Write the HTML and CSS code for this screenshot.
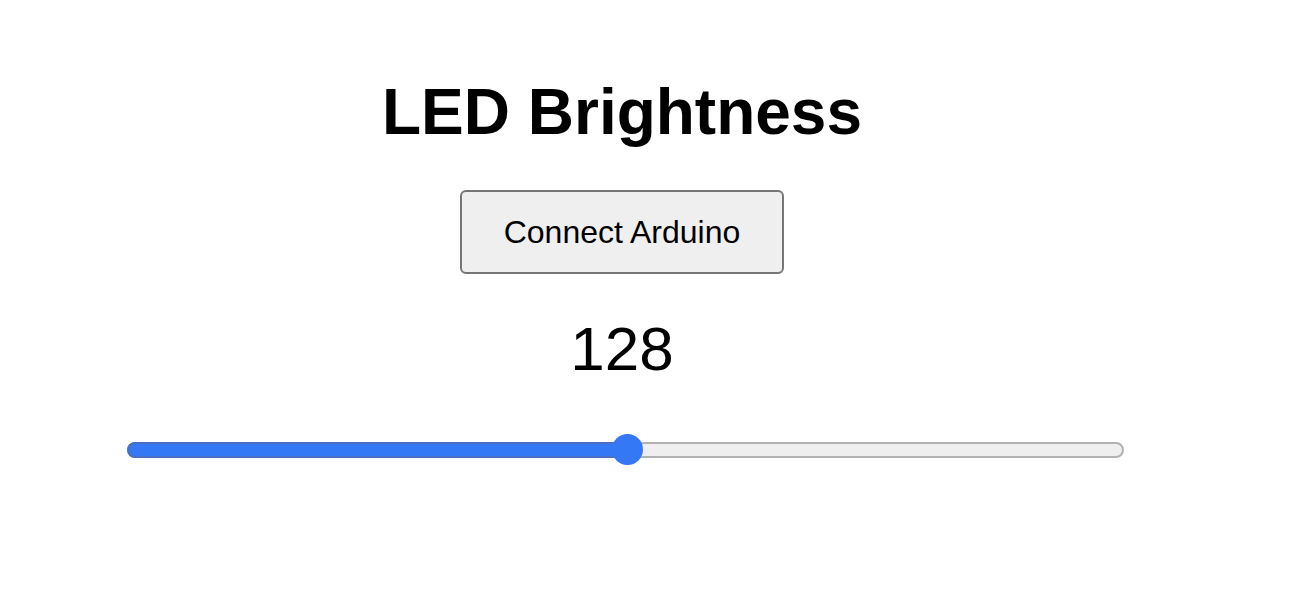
FILE: index.html
```html
<!DOCTYPE html>
<html lang="en">
<head>
<meta charset="utf-8">
<title>LED Brightness</title>
<link rel="stylesheet" href="styles.css">
</head>
<body>
  <main class="panel">
    <h1 class="title">LED Brightness</h1>
    <button class="connect" type="button">Connect Arduino</button>
    <div class="value">128</div>
    <div class="slider" role="slider" aria-valuemin="0" aria-valuemax="255" aria-valuenow="128">
      <div class="track">
        <div class="fill" style="width: 501px"></div>
      </div>
      <div class="thumb" style="margin-left: 485px"></div>
    </div>
  </main>
</body>
</html>
```

FILE: styles.css
```css
html, body {
  margin: 0;
  padding: 0;
  background: #ffffff;
}

body {
  font-family: "Liberation Sans", Arial, sans-serif;
  color: #000000;
}

.panel {
  width: 1000px;
  margin-left: 122px;
  display: flex;
  flex-direction: column;
  align-items: center;
}

.title {
  margin: 75px 0 0;
  font-size: 64px;
  font-weight: bold;
  line-height: 75px;
}

.connect {
  margin-top: 40px;
  width: 324px;
  height: 84px;
  box-sizing: border-box;
  background: #efefef;
  border: 2px solid #767676;
  border-radius: 6px;
  font-family: "Liberation Sans", Arial, sans-serif;
  font-size: 32px;
  color: #000000;
  padding: 0;
}

.value {
  margin-top: 39px;
  font-size: 62px;
  line-height: 72px;
}

/* range control: track with filled part, thumb stacked in the same grid cell */
.slider {
  align-self: flex-start;
  margin-left: 5px;
  margin-top: 49px;
  width: 997px;
  height: 31px;
  display: grid;
  align-items: center;
}

.track,
.thumb {
  grid-area: 1 / 1;
}

.track {
  height: 16px;
  box-sizing: border-box;
  background: #efefef;
  border: 2px solid #b2b2b2;
  border-radius: 8px;
  display: flex;
}

.fill {
  margin: -2px 0 -2px -2px;
  box-sizing: border-box;
  background: #3478f6;
  border: 2px solid #4a6fc4;
  border-right: none;
  border-radius: 8px 0 0 8px;
}

.thumb {
  justify-self: start;
  width: 31px;
  height: 31px;
  border-radius: 50%;
  background: #3478f6;
}
```
